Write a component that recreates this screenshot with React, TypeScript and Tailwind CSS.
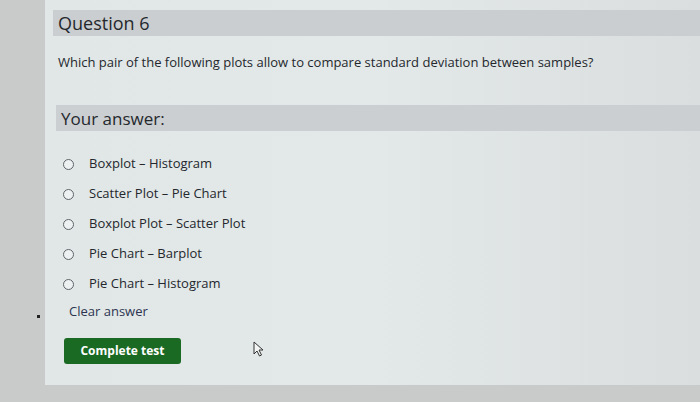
import React from 'react'

const options = [
  'Boxplot – Histogram',
  'Scatter Plot – Pie Chart',
  'Boxplot Plot – Scatter Plot',
  'Pie Chart – Barplot',
  'Pie Chart – Histogram',
]

export default function App() {
  return (
    <div
      className="w-[700px] h-[402px] bg-[#c8cbca] flex overflow-hidden text-[#24282d]"
      style={{ fontFamily: '"Open Sans", "Noto Sans", sans-serif' }}
    >
      <div className="w-[45px] shrink-0 flex flex-col">
        <div className="h-[315px]" />
        <div className="ml-[37px] w-[3px] h-[3px] bg-[#222]" />
      </div>
      <div className="flex-1 h-[385px] bg-gradient-to-r from-[#e1e6e7] via-[#e3e8e9] to-[#dadedf] pt-[10px] flex flex-col">
        {/* question header */}
        <div className="ml-[8px] h-[26px] bg-[#caced0] pl-[5px] flex items-center">
          <span className="text-[18px] leading-none">Question 6</span>
        </div>
        <p className="ml-[13px] mt-[17px] text-[13px] leading-[18px]">
          Which pair of the following plots allow to compare standard deviation between samples?
        </p>

        {/* answer header */}
        <div className="ml-[11px] mt-[34px] h-[26px] bg-[#cbcfd1] pl-[5px] flex items-center">
          <span className="text-[17px] leading-none">Your answer:</span>
        </div>

        <div className="mt-[24px] ml-[18px] flex flex-col gap-[12px]">
          {options.map(o => (
            <label key={o} className="flex items-center h-[18px] text-[13px]">
              <span className="w-[11px] h-[11px] rounded-full border-[1.5px] border-[#5f6468] bg-[#eef1f2]" />
              <span className="ml-[15px]">{o}</span>
            </label>
          ))}
        </div>

        <button className="self-start ml-[24px] mt-[9px] text-[13px] text-[#2c3550]">Clear answer</button>

        <div className="mt-[16px] ml-[19px] flex items-start">
          <button className="w-[117px] h-[26px] rounded-[3px] bg-[#1b6a23] text-white text-[12px] font-bold">
            Complete test
          </button>
          <svg className="ml-[72px] mt-[3px]" width="11" height="16" viewBox="0 0 11 16">
            <path
              d="M1 1 L1 13 L4 10 L6.5 15 L8.5 14 L6 9 L10 9 Z"
              fill="#f4f6f6"
              stroke="#333"
              strokeWidth="1"
              strokeLinejoin="round"
            />
          </svg>
        </div>
      </div>
    </div>
  )
}
